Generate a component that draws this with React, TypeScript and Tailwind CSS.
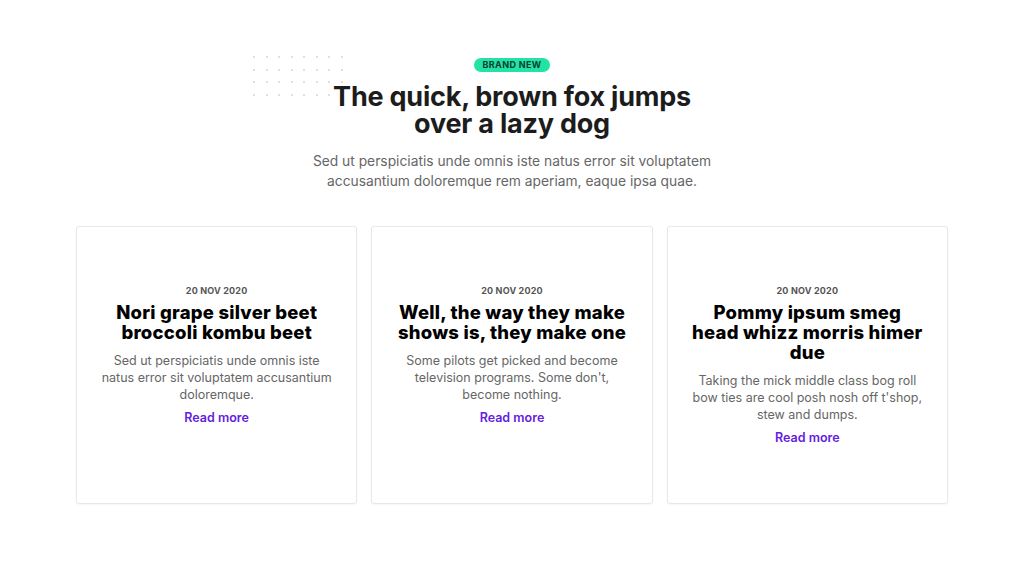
import React from 'react';

type Post = {
  date: string;
  title: string;
  body: string;
};

const posts: Post[] = [
  {
    date: '20 NOV 2020',
    title: 'Nori grape silver beet broccoli kombu beet',
    body: 'Sed ut perspiciatis unde omnis iste natus error sit voluptatem accusantium doloremque.',
  },
  {
    date: '20 NOV 2020',
    title: 'Well, the way they make shows is, they make one',
    body: "Some pilots get picked and become television programs. Some don't, become nothing.",
  },
  {
    date: '20 NOV 2020',
    title: 'Pommy ipsum smeg head whizz morris himer due',
    body: "Taking the mick middle class bog roll bow ties are cool posh nosh off t'shop, stew and dumps.",
  },
];

const DotGrid: React.FC = () => (
  <div className="grid grid-cols-8 gap-x-[10.5px] gap-y-[10.5px]">
    {Array.from({ length: 32 }).map((_, i) => (
      <span key={i} className="h-[2px] w-[2px] rounded-full bg-[#d4d4d8]" />
    ))}
  </div>
);

const PostCard: React.FC<{ post: Post }> = ({ post }) => (
  <div className="flex flex-col items-center rounded-[3px] border border-[#e8e8e8] bg-white px-6 pt-[58px] pb-[57px] text-center shadow-[0_1px_2px_rgba(0,0,0,0.04)]">
    <span className="text-[9px] font-bold leading-[12px] tracking-[0.02em] text-[#555]">{post.date}</span>
    <h3 className="mt-[5px] w-[234px] text-[18.5px] font-extrabold leading-[20px] tracking-[0.012em] text-black">
      {post.title}
    </h3>
    <p className="mt-[10px] w-[236px] text-[12.5px] leading-[17px] text-[#666]">{post.body}</p>
    <a href="#" className="mt-[6px] text-[12.5px] font-semibold leading-[17px] text-[#6420e0]">
      Read more
    </a>
  </div>
);

export default function App() {
  return (
    <div className="min-h-[580px] w-full bg-white font-['Inter',sans-serif]">
      <div className="relative flex flex-col items-center pt-[58px]">
        <div className="absolute left-[253px] top-[56px]">
          <DotGrid />
        </div>
        <span className="relative rounded-full bg-[#22e3a6] px-[9px] text-[9px] font-bold leading-[14px] tracking-[0.04em] text-[#0c3d30]">
          BRAND NEW
        </span>
        <h1 className="relative mt-[11px] w-[380px] text-center text-[27px] font-bold leading-[27px] tracking-[-0.008em] text-[#1c1c1c]">
          The quick, brown fox jumps over a lazy dog
        </h1>
        <p className="mt-[14px] w-[410px] text-center text-[13.8px] leading-[20px] text-[#666]">
          Sed ut perspiciatis unde omnis iste natus error sit voluptatem accusantium doloremque rem aperiam, eaque ipsa quae.
        </p>
      </div>
      <div className="mx-auto mt-[35px] grid w-[872px] grid-cols-3 gap-[14px]">
        {posts.map((post, i) => (
          <PostCard key={i} post={post} />
        ))}
      </div>
    </div>
  );
}
